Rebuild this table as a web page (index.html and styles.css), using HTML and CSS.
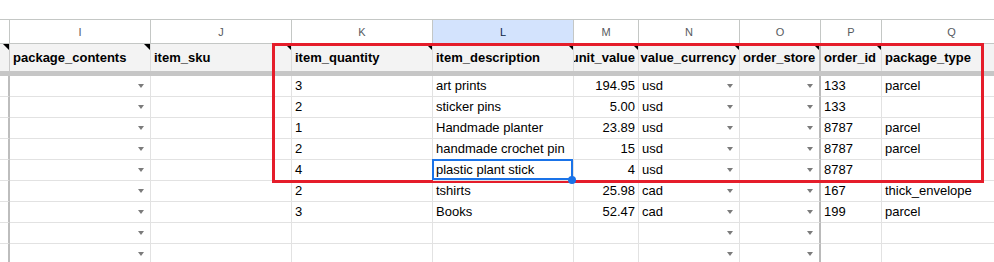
FILE: index.html
```html
<!DOCTYPE html>
<html>
<head>
<meta charset="utf-8">
<link rel="stylesheet" href="styles.css">
</head>
<body>
<div class="sheet">
  <div class="row colhead">
    <div class="c h"></div>
    <div class="c">I</div>
    <div class="c">J</div>
    <div class="c">K</div>
    <div class="c sel">L</div>
    <div class="c">M</div>
    <div class="c">N</div>
    <div class="c">O</div>
    <div class="c">P</div>
    <div class="c">Q</div>
  </div>
  <div class="row head">
    <div class="c h note"></div>
    <div class="c note">package_contents</div>
    <div class="c note">item_sku</div>
    <div class="c note">item_quantity</div>
    <div class="c note">item_description</div>
    <div class="c note r">unit_value</div>
    <div class="c note r">value_currency</div>
    <div class="c note o">order_store</div>
    <div class="c note">order_id</div>
    <div class="c">package_type</div>
  </div>

  <div class="row data">
    <div class="c h"></div><div class="c"><span class="dd"></span></div><div class="c"></div>
    <div class="c">3</div><div class="c">art prints</div><div class="c r">194.95</div>
    <div class="c">usd<span class="dd"></span></div><div class="c o"><span class="dd"></span></div>
    <div class="c">133</div><div class="c">parcel</div>
  </div>
  <div class="row data">
    <div class="c h"></div><div class="c"><span class="dd"></span></div><div class="c"></div>
    <div class="c">2</div><div class="c">sticker pins</div><div class="c r">5.00</div>
    <div class="c">usd<span class="dd"></span></div><div class="c o"><span class="dd"></span></div>
    <div class="c">133</div><div class="c"></div>
  </div>
  <div class="row data">
    <div class="c h"></div><div class="c"><span class="dd"></span></div><div class="c"></div>
    <div class="c">1</div><div class="c">Handmade planter</div><div class="c r">23.89</div>
    <div class="c">usd<span class="dd"></span></div><div class="c o"><span class="dd"></span></div>
    <div class="c">8787</div><div class="c">parcel</div>
  </div>
  <div class="row data">
    <div class="c h"></div><div class="c"><span class="dd"></span></div><div class="c"></div>
    <div class="c">2</div><div class="c">handmade crochet pin</div><div class="c r">15</div>
    <div class="c">usd<span class="dd"></span></div><div class="c o"><span class="dd"></span></div>
    <div class="c">8787</div><div class="c">parcel</div>
  </div>
  <div class="row data">
    <div class="c h"></div><div class="c"><span class="dd"></span></div><div class="c"></div>
    <div class="c">4</div><div class="c active">plastic plant stick</div><div class="c r">4</div>
    <div class="c">usd<span class="dd"></span></div><div class="c o"><span class="dd"></span></div>
    <div class="c">8787</div><div class="c"></div>
  </div>
  <div class="row data">
    <div class="c h"></div><div class="c"><span class="dd"></span></div><div class="c"></div>
    <div class="c">2</div><div class="c">tshirts</div><div class="c r">25.98</div>
    <div class="c">cad<span class="dd"></span></div><div class="c o"><span class="dd"></span></div>
    <div class="c">167</div><div class="c">thick_envelope</div>
  </div>
  <div class="row data">
    <div class="c h"></div><div class="c"><span class="dd"></span></div><div class="c"></div>
    <div class="c">3</div><div class="c">Books</div><div class="c r">52.47</div>
    <div class="c">cad<span class="dd"></span></div><div class="c o"><span class="dd"></span></div>
    <div class="c">199</div><div class="c">parcel</div>
  </div>
  <div class="row data">
    <div class="c h"></div><div class="c"><span class="dd"></span></div><div class="c"></div>
    <div class="c"></div><div class="c"></div><div class="c r"></div>
    <div class="c"><span class="dd"></span></div><div class="c o"><span class="dd"></span></div>
    <div class="c"></div><div class="c"></div>
  </div>
  <div class="row data">
    <div class="c h"></div><div class="c"><span class="dd"></span></div><div class="c"></div>
    <div class="c"></div><div class="c"></div><div class="c r"></div>
    <div class="c"><span class="dd"></span></div><div class="c o"><span class="dd"></span></div>
    <div class="c"></div><div class="c"></div>
  </div>

  <div class="highlight"></div>
</div>
</body>
</html>
```
FILE: styles.css
```css
html, body {
  margin: 0;
  padding: 0;
  background: #fff;
  overflow: hidden;
}

body {
  font-family: "Liberation Sans", Arial, sans-serif;
  color: #000;
}

.sheet {
  position: relative;
  width: 994px;
  height: 262px;
  padding-top: 19px;
  box-sizing: border-box;
  overflow: hidden;
}

.row {
  display: grid;
  grid-template-columns: 10px 141px 141px 141px 141px 65px 101px 81px 61px 140px;
}

.c {
  box-sizing: border-box;
  position: relative;
  display: flex;
  align-items: center;
  padding: 0 3px;
  white-space: nowrap;
  overflow: hidden;
  border-right: 1px solid #e2e2e2;
}

.c.r {
  justify-content: flex-end;
}

/* column letters row */
.colhead {
  border-top: 1px solid #c4c7c5;
}

.colhead .c {
  height: 24px;
  justify-content: center;
  font-size: 11px;
  color: #575a5e;
  background: #fff;
  border-right: 1px solid #c4c7c5;
  border-bottom: 1px solid #c4c7c5;
}

.colhead .c.sel {
  background: #d3e3fd;
  color: #0b1f44;
}

/* field name row */
.head {
  border-bottom: 5px solid #c6c6c6;
}

.head .c {
  height: 27px;
  line-height: 27px;
  font-size: 13px;
  font-weight: bold;
  background: #f3f3f3;
  border-right: 1px solid #dcdcdc;
}

.head .c.h {
  border-right: 1px solid #c9c9c9;
}

.head .c.o {
  border-right: 2px solid #bababa;
}

.note::before {
  content: "";
  position: absolute;
  top: 0;
  right: 0;
  width: 0;
  height: 0;
  border-left: 6px solid transparent;
  border-top: 6px solid #000;
}

/* data rows */
.data .c {
  height: 21px;
  line-height: 20px;
  font-size: 13px;
  border-bottom: 1px solid #e2e2e2;
}

.data .c.h {
  padding: 0;
  border-right: 2px solid #bdbdbd;
}

.data .c.o {
  border-right: 2px solid #bababa;
}

.dd {
  margin-left: auto;
  margin-right: 3px;
  width: 0;
  height: 0;
  border-left: 3.5px solid transparent;
  border-right: 3.5px solid transparent;
  border-top: 4px solid #7b7b7b;
  flex-shrink: 0;
}

.c.active {
  overflow: visible;
  z-index: 3;
}

.c.active::before {
  content: "";
  position: absolute;
  top: -1px;
  left: -1px;
  right: 0;
  bottom: 0;
  border: 2px solid #1a73e8;
}

.c.active::after {
  content: "";
  position: absolute;
  right: -3px;
  bottom: -4px;
  width: 8px;
  height: 8px;
  border-radius: 50%;
  background: #1a73e8;
}

/* red annotation frame */
.highlight {
  position: absolute;
  left: 272px;
  top: 43px;
  width: 712px;
  height: 140px;
  box-sizing: border-box;
  border: 3px solid #e51d2a;
  z-index: 2;
}
```
